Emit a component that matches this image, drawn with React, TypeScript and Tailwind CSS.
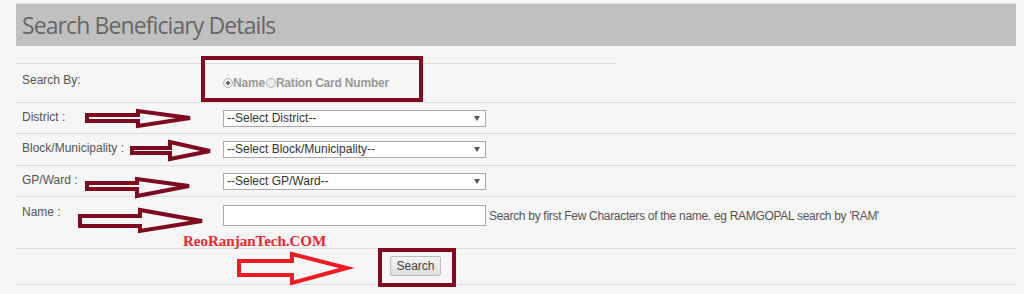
import type { ReactNode } from "react";

const selects = [
  { label: "District :", text: "--Select District--" },
  { label: "Block/Municipality :", text: "--Select Block/Municipality--" },
  { label: "GP/Ward :", text: "--Select GP/Ward--" },
];

function Row({
  label,
  children,
  className = "",
}: {
  label?: string;
  children: ReactNode;
  className?: string;
}) {
  return (
    <div className={`flex border-t border-[#dcdcdc] ${className}`}>
      <div className="w-[207px] shrink-0 pl-[6px] text-[12px] leading-[14px] text-[#555]">
        {label}
      </div>
      <div className="flex-1">{children}</div>
    </div>
  );
}

function FakeSelect({ text }: { text: string }) {
  return (
    <div className="relative w-[263px]">
      <select className="block h-[17px] w-full appearance-none border border-[#a9a9a9] bg-white pl-[3px] text-[12px] leading-[15px] text-[#333] outline-none">
        <option>{text}</option>
      </select>
      <span className="pointer-events-none absolute right-[6px] top-[6px] h-0 w-0 border-x-[3px] border-t-[5px] border-x-transparent border-t-[#555]" />
    </div>
  );
}

// red arrows drawn over the form
const arrows = [
  { c: "#7d0a1f", p: "87,115 138,115 138,111 190,118 138,126 138,121 87,121" },
  { c: "#7d0a1f", p: "132,148 170,148 170,142 210,151 170,159 170,153 132,153" },
  { c: "#7d0a1f", p: "87,183 137,183 137,179 189,186 137,196 137,189 87,189" },
  { c: "#7d0a1f", p: "80,216 140,216 140,210 202,221 140,231 140,226 80,226" },
  { c: "#ed1c24", p: "239,261 292,261 292,254 347,268 292,283 292,275 239,275" },
];

export default function App() {
  return (
    <div className="relative h-[294px] overflow-hidden bg-[#f6f6f6] font-['Liberation_Sans',Arial,sans-serif]">
      <div className="pl-4 pr-2 pt-[3px]">
        <div className="flex h-[43px] items-center border-t border-[#e4e4e4] bg-[#c0c0c0] pl-[6px]">
          <h2 className="font-['Open_Sans',sans-serif] text-[23px] tracking-[-0.9px] text-[#666]">
            Search Beneficiary Details
          </h2>
        </div>

        <div className="mt-[17px] w-[600px] border-t border-[#dcdcdc]" />
        <div className="flex h-[38px] items-start pt-[9px]">
          <div className="w-[207px] shrink-0 pl-[6px] text-[12px] leading-[14px] text-[#555]">
            Search By:
          </div>
          <div className="mt-[3px] flex items-center text-[12px] font-bold leading-[14px] tracking-[-0.2px] text-[#999]">
            <input
              type="radio"
              name="by"
              defaultChecked
              disabled
              className="h-[10px] w-[10px] appearance-none rounded-full border border-[#b4b4b4] bg-[radial-gradient(circle,#6a6a6a_28%,#ececec_36%)]"
            />
            <span>Name</span>
            <input
              type="radio"
              name="by"
              disabled
              className="ml-[1px] h-[10px] w-[10px] appearance-none rounded-full border border-[#b4b4b4] bg-[#ececec]"
            />
            <span>Ration Card Number</span>
          </div>
        </div>

        {selects.map((s, i) => (
          <Row key={s.label} label={s.label} className={i === 1 ? "h-[32px] pt-[7px]" : "h-[31px] pt-[7px]"}>
            <FakeSelect text={s.text} />
          </Row>
        ))}

        <Row label="Name :" className="h-[52px] pt-[8px]">
          <div className="flex items-center">
            <input className="h-[21px] w-[263px] border border-[#a9a9a9] bg-white outline-none" />
            <span className="ml-[3px] text-[12px] tracking-[-0.3px] text-[#555]">
              Search by first Few Characters of the name. eg RAMGOPAL search by 'RAM'
            </span>
          </div>
        </Row>

        <div className="flex h-[37px] items-start border-y border-[#dcdcdc] pt-[7px]">
          <button className="ml-[374px] h-[20px] w-[51px] rounded-[2px] border border-[#bdbdbd] bg-[linear-gradient(#f4f4f4,#dedede)] text-[12px] leading-[18px] text-[#444]">
            Search
          </button>
        </div>
      </div>

      {/* annotations */}
      <div className="pointer-events-none absolute left-[201px] top-[56px] h-[46px] w-[222px] border-4 border-[#820b1d]" />
      <div className="pointer-events-none absolute left-[378px] top-[248px] h-[39px] w-[78px] border-4 border-[#820b1d]" />
      <div className="pointer-events-none absolute left-[183px] top-[232px] font-['Liberation_Serif',serif] text-[15px] font-bold leading-[18px] text-[#f0252d]">
        ReoRanjanTech.COM
      </div>
      <svg className="pointer-events-none absolute left-0 top-0" width="1024" height="294">
        {arrows.map((a, i) => (
          <polygon key={i} points={a.p} fill="none" stroke={a.c} strokeWidth="4" strokeLinejoin="miter" />
        ))}
      </svg>
    </div>
  );
}
